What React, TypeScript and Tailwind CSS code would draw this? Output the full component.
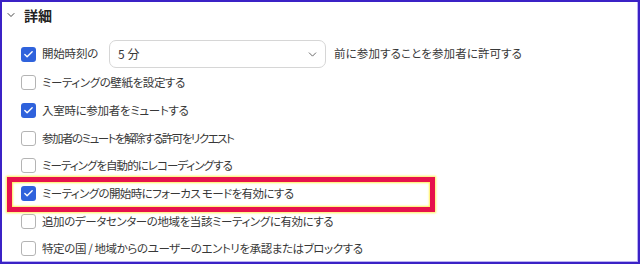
import { Check, ChevronDown } from 'lucide-react'

type Option = { label: string; checked: boolean; track: string }

const options: Option[] = [
  { label: 'ミーティングの壁紙を設定する', checked: false, track: 'tracking-[-0.4px]' },
  { label: '入室時に参加者をミュートする', checked: true, track: 'tracking-[-0.3px]' },
  { label: '参加者のミュートを解除する許可をリクエスト', checked: false, track: 'tracking-[-1.5px]' },
  { label: 'ミーティングを自動的にレコーディングする', checked: false, track: 'tracking-[-0.95px]' },
  { label: 'ミーティングの開始時にフォーカス モードを有効にする', checked: true, track: 'tracking-[-0.6px]' },
  { label: '追加のデータセンターの地域を当該ミーティングに有効にする', checked: false, track: 'tracking-[-0.4px]' },
  { label: '特定の国 / 地域からのユーザーのエントリを承認またはブロックする', checked: false, track: 'tracking-[-0.4px]' },
]

function Box({ checked }: { checked: boolean }) {
  if (checked) {
    return (
      <span className="flex h-[15px] w-[15px] shrink-0 items-center justify-center rounded-[3px] bg-[#2f62dc]">
        <Check size={11} strokeWidth={3} color="#fff" />
      </span>
    )
  }
  return <span className="h-[15px] w-[15px] shrink-0 rounded-[3px] border border-[#b4b4b4] bg-white" />
}

export default function App() {
  return (
    <div className="relative h-[264px] w-[640px] overflow-hidden border-2 border-[#3b22c6] bg-white font-['Noto_Sans_CJK_JP','Noto_Sans',sans-serif] [font-feature-settings:'palt'] text-[#383838]">
      <div className="h-full w-full border-b border-r border-[#b9b0f4]">
        <div className="flex h-[37px] items-start gap-[7px] pl-[3px] pt-[4px]">
          <ChevronDown size={12} strokeWidth={1.8} color="#333" className="mt-[3px]" />
          <span className="text-[14px] font-bold leading-[18px] text-[#222]">詳細</span>
        </div>

        <div className="flex h-[30px] items-center pl-[19px] text-[11.5px]">
          <Box checked />
          <span className="ml-[6px] tracking-[-0.2px]">開始時刻の</span>
          <div className="ml-[11px] flex h-[28px] w-[217px] items-center justify-between rounded-[7px] border border-[#d6d6d6] pl-[8px] pr-[6px] text-[12px]">
            <span>5 分</span>
            <ChevronDown size={13} strokeWidth={1.6} color="#555" />
          </div>
          <span className="ml-[8px] tracking-[0.1px]">前に参加することを参加者に許可する</span>
        </div>

        {options.map((o) => (
          <div key={o.label} className="flex h-[27.7px] items-center pl-[19px] text-[11.5px]">
            <Box checked={o.checked} />
            <span className={`ml-[6px] whitespace-nowrap ${o.track}`}>{o.label}</span>
          </div>
        ))}
      </div>

      <div className="pointer-events-none absolute left-[5px] top-[175px] h-[35px] w-[428px] border-[5px] border-[#e6124c] shadow-[0_0_2px_1px_#fff05a,inset_0_0_2px_1px_#fff05a]" />
    </div>
  )
}
